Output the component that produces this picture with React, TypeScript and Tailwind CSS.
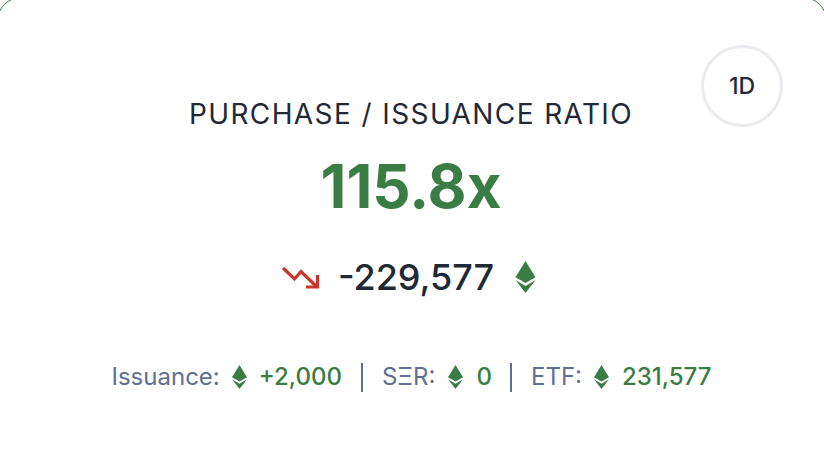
function EthIcon({ className }: { className: string }) {
  return (
    <svg viewBox="0 0 20 32" className={className} fill="#3a7d44">
      <path d="M10 0 L20 16.2 L10 22 L0 16.2 Z" />
      <path d="M10 32 L0 19 L10 25 L20 19 Z" />
    </svg>
  );
}

function TrendDown() {
  return (
    <svg viewBox="0 0 38 24" className="w-[38px] h-[24px]" fill="none" stroke="#c8372d" strokeWidth="3.2">
      <path d="M1 3 L12.5 14 L19 6.5 L34 21" />
      <path d="M35.5 10 V22 H24" />
    </svg>
  );
}

export default function App() {
  return (
    <div className="w-[824px] h-[476px] overflow-hidden bg-white font-['Inter',sans-serif]">
      <div className="relative -mx-[3px] -mt-[3px] h-[500px] rounded-[24px] border border-[#3a7d44] bg-white flex flex-col items-center pt-[100px]">
        <div className="absolute top-[47px] right-[43px] w-[82px] h-[82px] rounded-full border-[3px] border-[#eaebef] bg-white flex items-center justify-center text-[23px] font-medium text-[#1f2937]">
          1D
        </div>
        <h2 className="mr-[2px] text-[28px] leading-[32px] tracking-[1.4px] text-[#1f2937] whitespace-nowrap">PURCHASE / ISSUANCE RATIO</h2>
        <div className="mt-[18px] mr-[2px] text-[60px] leading-[76px] font-bold text-[#3a7d44]">115.8x</div>
        <div className="mt-[31px] mr-[6px] flex items-center text-[#1f2937]">
          <TrendDown />
          <span className="ml-[18px] text-[36px] leading-[44px] font-medium">-229,577</span>
          <EthIcon className="ml-[21px] w-[21px] h-[32px]" />
        </div>
        <div className="mt-[62px] mr-[1px] flex items-center text-[24px] leading-[32px] text-[#5f6f8f] whitespace-nowrap">
          <span>Issuance:</span>
          <EthIcon className="ml-[12px] w-[15px] h-[24px]" />
          <span className="ml-[12px] font-medium text-[#3a7d44]">+2,000</span>
          <span className="mx-[19px] w-[2px] h-[29px] bg-[#5f6f8f]" />
          <span>SΞR:</span>
          <EthIcon className="ml-[13px] w-[15px] h-[24px]" />
          <span className="ml-[13px] font-medium text-[#3a7d44]">0</span>
          <span className="ml-[18px] mr-[19px] w-[2px] h-[29px] bg-[#5f6f8f]" />
          <span>ETF:</span>
          <EthIcon className="ml-[12px] w-[15px] h-[24px]" />
          <span className="ml-[13px] font-medium text-[#3a7d44]">231,577</span>
        </div>
      </div>
    </div>
  );
}
